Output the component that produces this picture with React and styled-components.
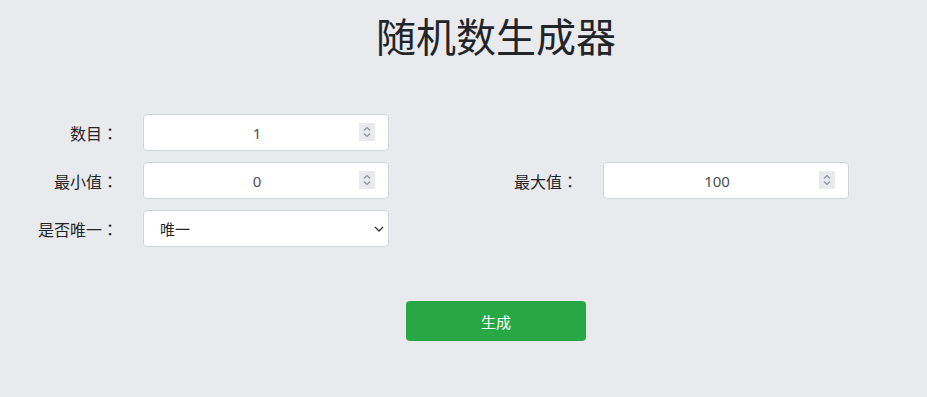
import React, { useState } from "react";
import styled, { createGlobalStyle } from "styled-components";

const GlobalStyle = createGlobalStyle`
  html, body {
    margin: 0;
    padding: 0;
    background: #e9eaee;
  }
  body {
    font-family: "Noto Sans", "Noto Sans CJK SC", sans-serif;
    color: #212529;
  }
`;

const Page = styled.div`
  height: 397px;
  display: flex;
  flex-direction: column;
`;

const Title = styled.h1`
  margin: 13px 0 0;
  padding-left: 65px;
  text-align: center;
  font-size: 40px;
  font-weight: 400;
  line-height: 48px;
  color: #212529;
`;

const Form = styled.div`
  margin-top: 53px;
  display: grid;
  grid-template-columns: 460px auto;
  row-gap: 11px;
`;

const Field = styled.div`
  display: flex;
  align-items: center;
  gap: 25px;
`;

const Label = styled.label`
  width: 118px;
  text-align: right;
  font-size: 16px;
  white-space: nowrap;
`;

const Colon = styled.span`
  font-family: "Noto Sans CJK JP", sans-serif;
`;

const Control = styled.div`
  position: relative;
  width: 246px;
  height: 37px;
`;

const NumberInput = styled.input`
  box-sizing: border-box;
  width: 100%;
  height: 100%;
  padding: 6px 30px 6px 12px;
  border: 1px solid #ced4da;
  border-radius: 4px;
  background: #fff;
  font-family: inherit;
  font-size: 15px;
  color: #495057;
  text-align: center;
  outline: none;
  appearance: textfield;
  &::-webkit-inner-spin-button,
  &::-webkit-outer-spin-button {
    -webkit-appearance: none;
    margin: 0;
  }
`;

const Spinner = styled.span`
  position: absolute;
  right: 14px;
  top: 9px;
  width: 16px;
  height: 18px;
  background: #e9eaee;
  display: flex;
  align-items: center;
  justify-content: center;
  pointer-events: none;
`;

const Select = styled.select`
  box-sizing: border-box;
  width: 100%;
  height: 100%;
  padding: 6px 16px;
  border: 1px solid #ced4da;
  border-radius: 4px;
  background: #fff;
  font-family: inherit;
  font-size: 15px;
  color: #212529;
  outline: none;
  appearance: none;
`;

const Caret = styled.svg`
  position: absolute;
  right: 5px;
  top: 16px;
  pointer-events: none;
`;

const Actions = styled.div`
  margin-top: 54px;
  padding-left: 65px;
  display: flex;
  justify-content: center;
`;

const Button = styled.button`
  width: 180px;
  height: 40px;
  border: none;
  border-radius: 4px;
  background: #28a745;
  color: #fff;
  font-family: inherit;
  font-size: 15px;
  cursor: pointer;
`;

const Empty = styled.div``;

const NumberField = ({ id, label, value, onChange }) => (
  <Field>
    <Label htmlFor={id}>
      {label}
      <Colon>：</Colon>
    </Label>
    <Control>
      <NumberInput id={id} type="number" value={value} onChange={onChange} />
      <Spinner>
        <svg width="10" height="14" viewBox="0 0 10 14">
          <path d="M2 5.5 L5 2.5 L8 5.5" fill="none" stroke="#8d929b" strokeWidth="1.2" />
          <path d="M2 8.5 L5 11.5 L8 8.5" fill="none" stroke="#8d929b" strokeWidth="1.2" />
        </svg>
      </Spinner>
    </Control>
  </Field>
);

export default function App() {
  const [count, setCount] = useState(1);
  const [min, setMin] = useState(0);
  const [max, setMax] = useState(100);
  const [unique, setUnique] = useState("yes");

  return (
    <Page>
      <GlobalStyle />
      <Title>随机数生成器</Title>
      <Form>
        <NumberField id="count" label="数目" value={count} onChange={(e) => setCount(e.target.value)} />
        <Empty />
        <NumberField id="min" label="最小值" value={min} onChange={(e) => setMin(e.target.value)} />
        <NumberField id="max" label="最大值" value={max} onChange={(e) => setMax(e.target.value)} />
        <Field>
          <Label htmlFor="unique">
            是否唯一
            <Colon>：</Colon>
          </Label>
          <Control>
            <Select id="unique" value={unique} onChange={(e) => setUnique(e.target.value)}>
              <option value="yes">唯一</option>
              <option value="no">不唯一</option>
            </Select>
            <Caret width="10" height="6" viewBox="0 0 10 6">
              <path d="M1 1 L5 5 L9 1" fill="none" stroke="#333" strokeWidth="1.3" />
            </Caret>
          </Control>
        </Field>
      </Form>
      <Actions>
        <Button>生成</Button>
      </Actions>
    </Page>
  );
}
